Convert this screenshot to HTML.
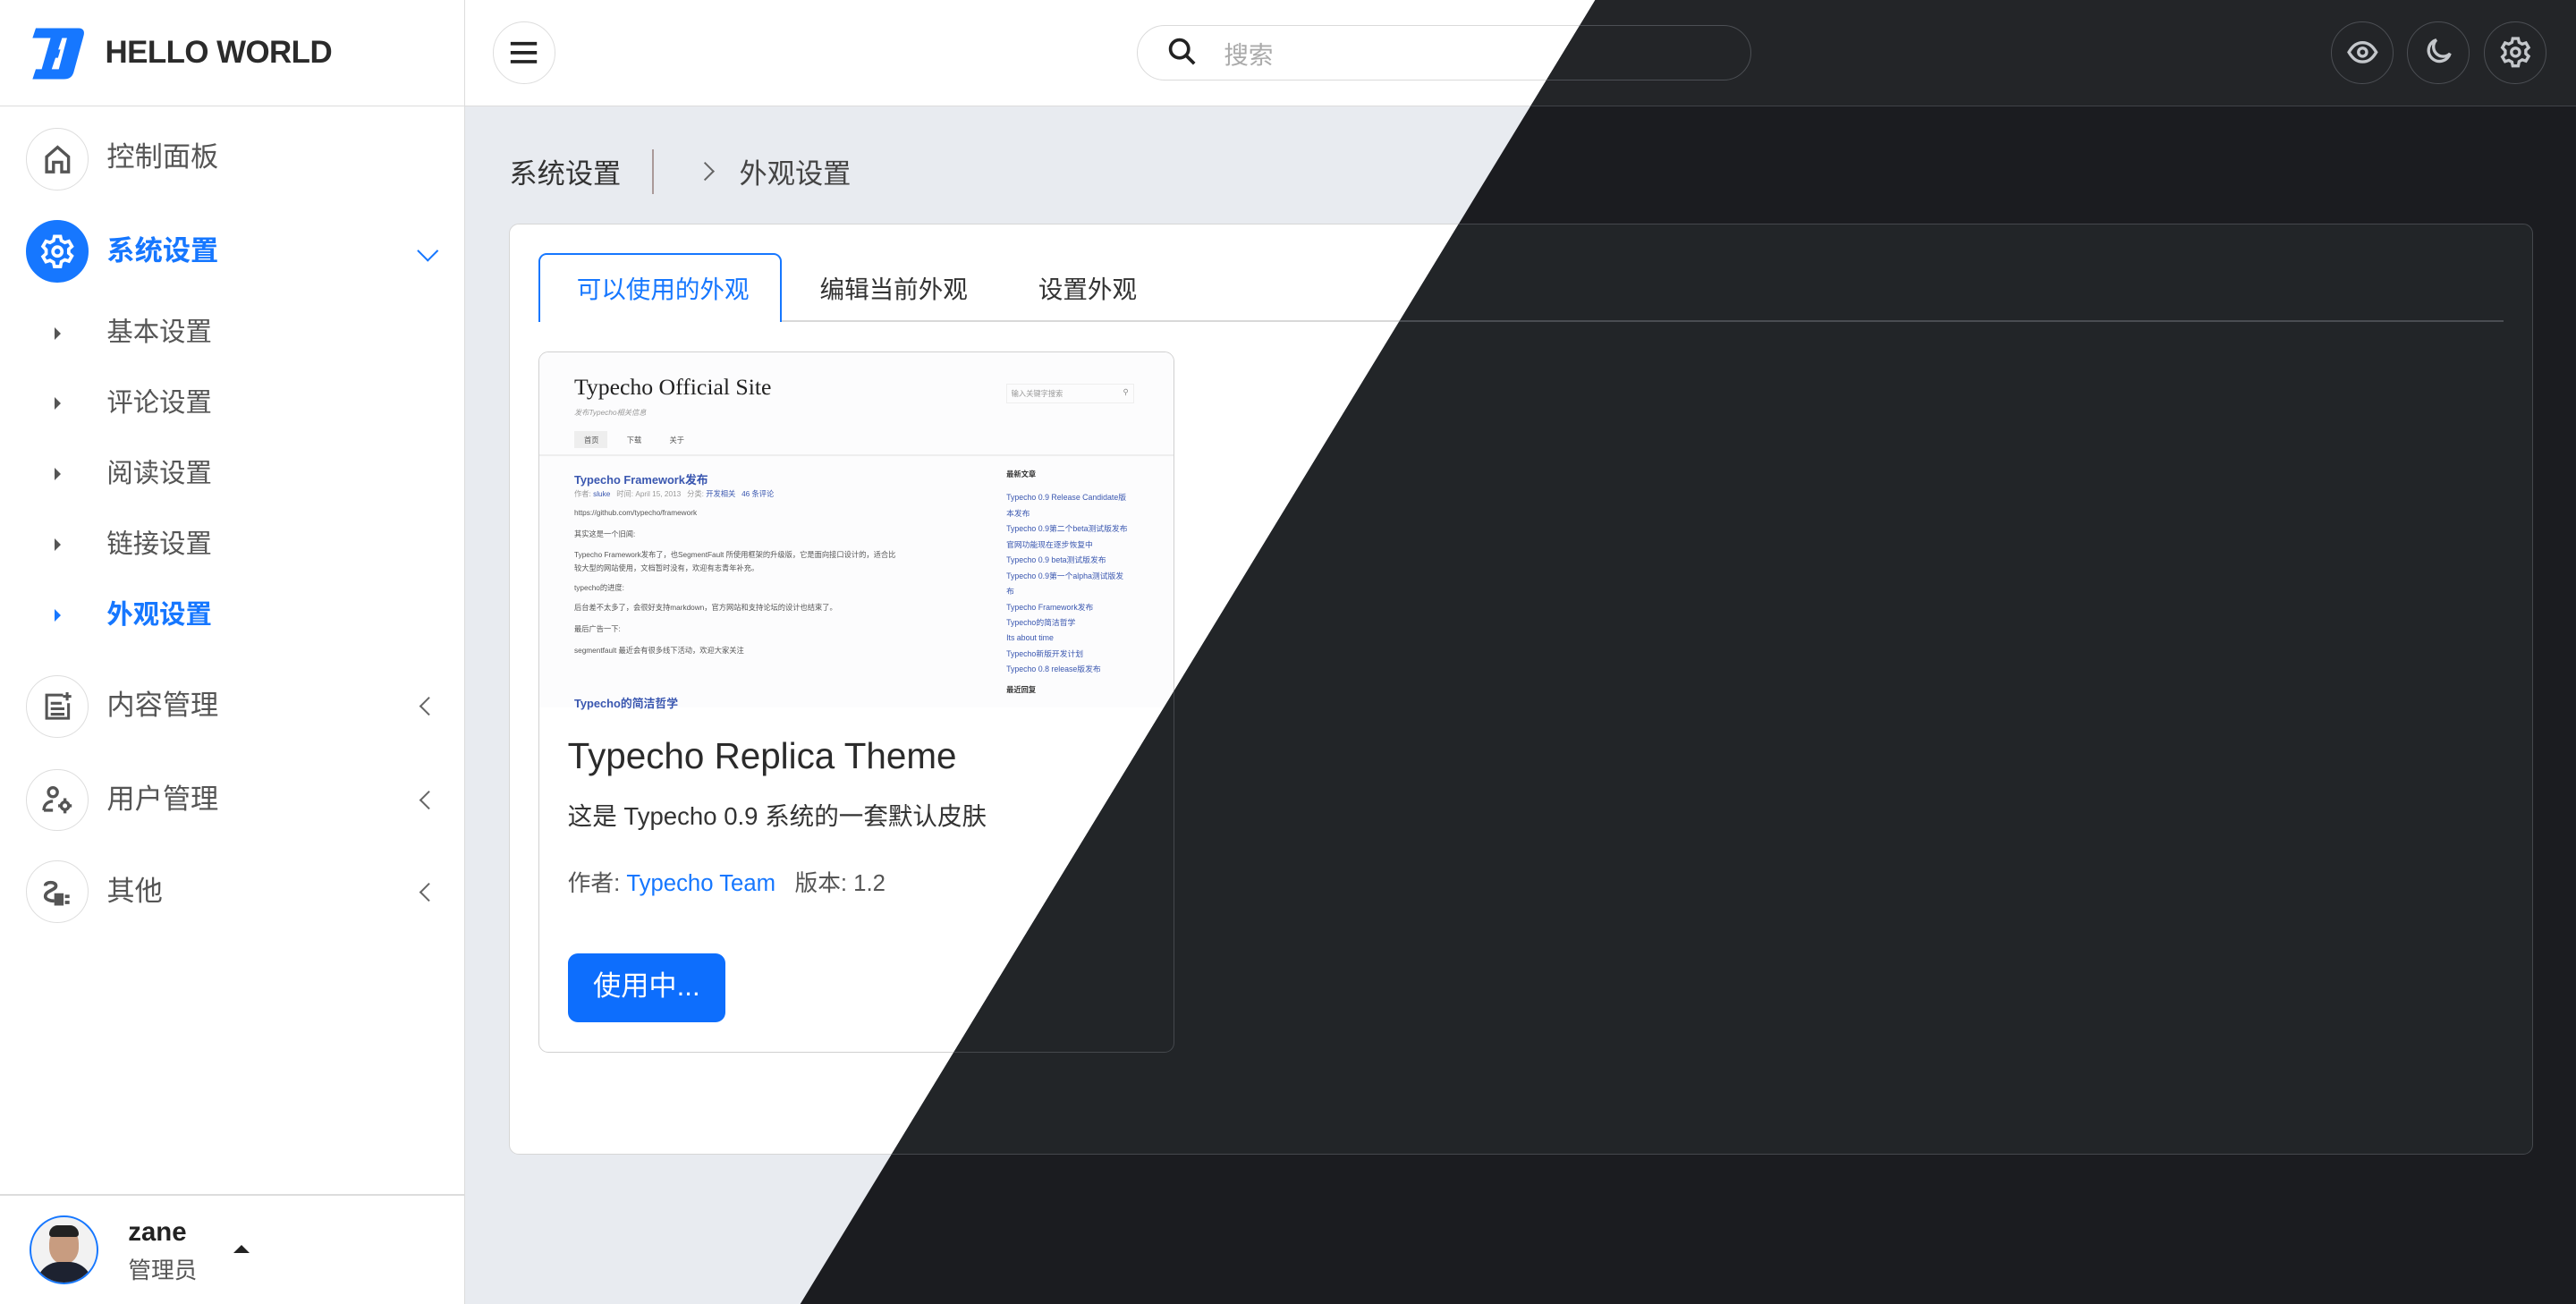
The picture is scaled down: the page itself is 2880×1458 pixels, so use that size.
<!DOCTYPE html>
<html><head><meta charset="utf-8"><style>
*{box-sizing:border-box;margin:0;padding:0}
html,body{width:2880px;height:1458px;overflow:hidden;background:#e8ebf0}
#root{zoom:1.83673;width:1568px;height:794px;position:relative;font-family:"Liberation Sans","Noto Sans CJK SC",sans-serif;color:#333}
.a{position:absolute}
.ic{position:absolute;width:38px;height:38px;border-radius:50%;border:1px solid #ddd;display:flex;align-items:center;justify-content:center;background:#fff}
.mi{position:absolute;left:65px;font-size:17px;color:#555;line-height:20px}
.sub{position:absolute;left:65px;font-size:16px;color:#555;line-height:20px}
.tri{position:absolute;left:33px;width:0;height:0;border-left:4px solid #555;border-top:4px solid transparent;border-bottom:4px solid transparent}
.chev{position:absolute;left:256px;width:8px;height:8px;border-left:1.3px solid #666;border-bottom:1.3px solid #666;transform:rotate(45deg)}
.pv{position:absolute;font-size:4.5px;color:#555;white-space:nowrap}
.pl{position:absolute;font-size:5px;color:#3a57b0;white-space:nowrap}
#dark{position:absolute;left:0;top:0;width:1568px;height:794px;clip-path:polygon(971px 0,1568px 0,1568px 794px,487px 794px);background:#1b1c20}
</style></head><body><div id="root">

<div class="a" style="left:0;top:0;width:283px;height:794px;background:#fff;border-right:1px solid #dcdcdc"></div>
<div class="a" style="left:0;top:64px;width:283px;height:1px;background:#dcdcdc"></div>
<svg class="a" style="left:16px;top:14px" width="37" height="37" viewBox="0 0 37 37"><path d="M6 3h26c3 0 4 2 3 5l-6 22c-1 3-3 4-6 4H4l2-6h14l5-19H22L15 30H9L15 9H4z" fill="#1677ff"/><path d="M14 16h7l-1.5 5h-7z" fill="#1677ff"/></svg>
<div class="a" style="left:64px;top:21px;font-size:19px;font-weight:bold;color:#2b2b2b;letter-spacing:-0.3px">HELLO WORLD</div>

<div class="ic" style="left:16px;top:78px"><svg width="20" height="20" viewBox="0 0 24 24" fill="none" stroke="#555" stroke-width="2.2"><path d="M4 21V10l8-7 8 7v11h-5v-7H9v7z"/></svg></div>
<div class="mi" style="top:86px">控制面板</div>
<div class="ic" style="left:16px;top:134px;background:#1677ff;border-color:#1677ff"><svg width="22" height="22" viewBox="0 0 24 24" fill="none" stroke="#fff" stroke-width="2.2"><circle cx="12" cy="12" r="3"/><path d="M10 2h4l.6 2.8 2.3 1.3 2.7-.9 2 3.4-2.1 1.9v2.6l2.1 1.9-2 3.4-2.7-.9-2.3 1.3L14 22h-4l-.6-2.8-2.3-1.3-2.7.9-2-3.4 2.1-1.9v-2.6L2.4 8.6l2-3.4 2.7.9 2.3-1.3z"/></svg></div>
<div class="mi" style="top:143px;color:#1677ff;font-weight:bold">系统设置</div>
<div class="a" style="left:256px;top:148px;width:9px;height:9px;border-right:1.4px solid #1677ff;border-bottom:1.4px solid #1677ff;transform:rotate(45deg)"></div>
<div class="tri" style="top:199px"></div><div class="sub" style="top:193px">基本设置</div>
<div class="tri" style="top:242px"></div><div class="sub" style="top:236px">评论设置</div>
<div class="tri" style="top:285px"></div><div class="sub" style="top:279px">阅读设置</div>
<div class="tri" style="top:328px"></div><div class="sub" style="top:322px">链接设置</div>
<div class="tri" style="top:371px;border-left-color:#1677ff"></div><div class="sub" style="top:365px;color:#1677ff;font-weight:bold">外观设置</div>

<div class="ic" style="left:16px;top:411px"><svg width="20" height="20" viewBox="0 0 24 24" fill="none" stroke="#555" stroke-width="2"><path d="M16 4H4v17h16V10M7 10h8M7 14h10M7 18h10M19 2v6M16 5h6"/></svg></div>
<div class="mi" style="top:420px">内容管理</div><div class="chev" style="top:426px;left:257px"></div>
<div class="ic" style="left:16px;top:468px"><svg width="22" height="22" viewBox="0 0 24 24" fill="none" stroke="#555" stroke-width="2"><circle cx="9" cy="7" r="3"/><path d="M3 19c0-4 3-6 6-6M3 19h6"/><circle cx="17" cy="16" r="2.5"/><path d="M17 11v2M17 19v2M12.5 16h2M19.5 16h2"/></svg></div>
<div class="mi" style="top:477px">用户管理</div><div class="chev" style="top:483px;left:257px"></div>
<div class="ic" style="left:16px;top:524px"><svg width="22" height="22" viewBox="0 0 24 24" fill="none" stroke="#555" stroke-width="2.2"><path d="M4 8c0-3 7-3 7 0s-7 3-7 7c0 2 3 3 6 3"/><path d="M11 14h4v6h-4z" fill="#555"/><path d="M17 15h3M17 19h3"/></svg></div>
<div class="mi" style="top:533px">其他</div><div class="chev" style="top:539px;left:257px"></div>

<div class="a" style="left:0;top:727px;width:283px;height:1px;background:#dcdcdc"></div>
<div class="a" style="left:18px;top:740px;width:42px;height:42px;border-radius:50%;border:1.5px solid #1677ff;background:#f2f2f2;overflow:hidden">
 <div class="a" style="left:11px;top:6px;width:18px;height:22px;border-radius:45%;background:#c89c80"></div>
 <div class="a" style="left:11px;top:5px;width:18px;height:7px;border-radius:6px 6px 2px 2px;background:#222"></div>
 <div class="a" style="left:3px;top:27px;width:34px;height:20px;border-radius:14px 14px 0 0;background:#1d2230"></div>
</div>
<div class="a" style="left:78px;top:741px;font-size:16px;font-weight:bold;color:#222">zane</div>
<div class="a" style="left:78px;top:762px;font-size:14px;color:#555">管理员</div>
<div class="a" style="left:142px;top:758px;border-bottom:5px solid #222;border-left:5px solid transparent;border-right:5px solid transparent"></div>

<div class="a" style="left:283px;top:0;width:1285px;height:65px;background:#fff;border-bottom:1px solid #dcdcdc"></div>
<div class="ic" style="left:300px;top:13px"><svg width="18" height="14" viewBox="0 0 18 14"><path d="M1 1.5h16M1 7h16M1 12.5h16" stroke="#222" stroke-width="2"/></svg></div>
<div class="a" style="left:692px;top:15px;width:374px;height:34px;border-radius:17px;border:1px solid #dadada;background:#fff"></div>
<svg class="a" style="left:710px;top:22px" width="20" height="20" viewBox="0 0 20 20" fill="none" stroke="#222" stroke-width="2"><circle cx="8" cy="8" r="5.5"/><path d="M12 12l5 5"/></svg>
<div class="a" style="left:745px;top:21px;font-size:15px;color:#aaa">搜索</div>

<div class="a" style="left:310px;top:92px;font-size:17px;color:#333">系统设置</div>
<div class="a" style="left:397px;top:91px;width:1px;height:27px;background:#a99"></div>
<div class="a" style="left:425px;top:100px;width:8px;height:8px;border-top:1.4px solid #666;border-right:1.4px solid #666;transform:rotate(45deg)"></div>
<div class="a" style="left:450px;top:92px;font-size:17px;color:#444">外观设置</div>

<div class="a" style="left:310px;top:136px;width:1232px;height:567px;background:#fff;border:1px solid #d6d6d6;border-radius:6px"></div>
<div class="a" style="left:328px;top:195px;width:1196px;height:1px;background:#d8d8d8"></div>
<div class="a" style="left:328px;top:154px;width:148px;height:42px;background:#fff;border:1.3px solid #1677ff;border-bottom:none;border-radius:5px 5px 0 0"></div>
<div class="a" style="left:351px;top:164px;font-size:15px;color:#1677ff">可以使用的外观</div>
<div class="a" style="left:499px;top:164px;font-size:15px;color:#333">编辑当前外观</div>
<div class="a" style="left:632px;top:164px;font-size:15px;color:#333">设置外观</div>

<div class="a" style="left:328px;top:214px;width:387px;height:427px;border:1px solid #d0d0d0;border-radius:6px;background:#fff;overflow:hidden">
 <div class="a" style="left:0;top:0;width:387px;height:216px;background:#fcfcfd">
  <div class="a" style="left:21px;top:13px;font-family:'Liberation Serif',serif;font-size:14px;color:#222">Typecho Official Site</div>
  <div class="pv" style="left:21px;top:33px;color:#999;font-style:italic">发布Typecho相关信息</div>
  <div class="a" style="left:284px;top:19px;width:78px;height:12px;border:1px solid #eee"></div>
  <div class="pv" style="left:287px;top:22px;color:#999">输入关键字搜索</div>
  <div class="pv" style="left:355px;top:21px;color:#888">⚲</div>
  <div class="a" style="left:21px;top:48px;width:20px;height:10px;background:#eee"></div>
  <div class="pv" style="left:27px;top:50px">首页</div><div class="pv" style="left:53px;top:50px">下载</div><div class="pv" style="left:79px;top:50px">关于</div>
  <div class="a" style="left:0;top:62px;width:387px;height:1px;background:#eee"></div>
  <div class="pl" style="left:21px;top:72px;font-size:7px;font-weight:bold">Typecho Framework发布</div>
  <div class="pv" style="left:21px;top:83px;color:#999">作者: <span style="color:#3a57b0">sluke</span> &nbsp; 时间: April 15, 2013 &nbsp; 分类: <span style="color:#3a57b0">开发相关 &nbsp; 46 条评论</span></div>
  <div class="pv" style="left:21px;top:95px">https://github.com/typecho/framework</div>
  <div class="pv" style="left:21px;top:107px">其实这是一个旧闻:</div>
  <div class="pv" style="left:21px;top:120px">Typecho Framework发布了，也SegmentFault 所使用框架的升级版，它是面向接口设计的，适合比</div>
  <div class="pv" style="left:21px;top:128px">较大型的网站使用，文档暂时没有，欢迎有志青年补充。</div>
  <div class="pv" style="left:21px;top:140px">typecho的进度:</div>
  <div class="pv" style="left:21px;top:152px">后台差不太多了，会很好支持markdown，官方网站和支持论坛的设计也结束了。</div>
  <div class="pv" style="left:21px;top:165px">最后广告一下:</div>
  <div class="pv" style="left:21px;top:178px">segmentfault 最近会有很多线下活动，欢迎大家关注</div>
  <div class="pl" style="left:21px;top:208px;font-size:7px;font-weight:bold">Typecho的简洁哲学</div>
  <div class="pv" style="left:284px;top:71px;font-weight:bold;color:#333">最新文章</div>
  <div class="pl" style="left:284px;top:84px;line-height:9.5px;font-size:4.8px">Typecho 0.9 Release Candidate版<br>本发布<br>Typecho 0.9第二个beta测试版发布<br>官网功能现在逐步恢复中<br>Typecho 0.9 beta测试版发布<br>Typecho 0.9第一个alpha测试版发<br>布<br>Typecho Framework发布<br>Typecho的简洁哲学<br>Its about time<br>Typecho新版开发计划<br>Typecho 0.8 release版发布</div>
  <div class="pv" style="left:284px;top:202px;font-weight:bold;color:#333">最近回复</div>
 </div>
 <div class="a" style="left:17px;top:233px;font-size:22px;color:#2b2b2b">Typecho Replica Theme</div>
 <div class="a" style="left:17px;top:270px;font-size:15px;color:#333">这是 Typecho 0.9 系统的一套默认皮肤</div>
 <div class="a" style="left:17px;top:312px;font-size:14px;color:#555">作者: <span style="color:#1677ff">Typecho Team</span> &nbsp; 版本: 1.2</div>
 <div class="a" style="left:17px;top:366px;width:96px;height:42px;background:#0d6efd;border-radius:6px;color:#fff;font-size:17px;line-height:40px;text-align:center">使用中...</div>
</div>

<div id="dark">
 <div class="a" style="left:283px;top:0;width:1285px;height:65px;background:#232528;border-bottom:1px solid #404348"></div>
 <div class="a" style="left:692px;top:15px;width:374px;height:34px;border-radius:17px;border:1px solid #4c4f54;background:#232528"></div>
 <div class="ic" style="left:1419px;top:13px;background:#232528;border-color:#4c4f54"><svg width="20" height="20" viewBox="0 0 24 24" fill="none" stroke="#c4c7cb" stroke-width="2.2"><path d="M2 12c3-5 6-7 10-7s7 2 10 7c-3 5-6 7-10 7s-7-2-10-7z"/><circle cx="12" cy="12" r="3"/></svg></div>
 <div class="ic" style="left:1465px;top:13px;background:#232528;border-color:#4c4f54"><svg width="20" height="20" viewBox="0 0 24 24" fill="none" stroke="#c4c7cb" stroke-width="2.2"><path d="M11 3a8 8 0 1 0 10 10 7 7 0 0 1-10-10z"/></svg></div>
 <div class="ic" style="left:1512px;top:13px;background:#232528;border-color:#4c4f54"><svg width="20" height="20" viewBox="0 0 24 24" fill="none" stroke="#c4c7cb" stroke-width="2.2"><circle cx="12" cy="12" r="3"/><path d="M10 2h4l.6 2.8 2.3 1.3 2.7-.9 2 3.4-2.1 1.9v2.6l2.1 1.9-2 3.4-2.7-.9-2.3 1.3L14 22h-4l-.6-2.8-2.3-1.3-2.7.9-2-3.4 2.1-1.9v-2.6L2.4 8.6l2-3.4 2.7.9 2.3-1.3z"/></svg></div>
 <div class="a" style="left:310px;top:136px;width:1232px;height:567px;background:#222528;border:1px solid #45484d;border-radius:6px"></div>
 <div class="a" style="left:328px;top:195px;width:1196px;height:1px;background:#4a4d52"></div>
 <div class="a" style="left:328px;top:214px;width:387px;height:427px;border:1px solid #45484d;border-radius:6px;background:#222528"></div>
</div>
</div></body></html>
